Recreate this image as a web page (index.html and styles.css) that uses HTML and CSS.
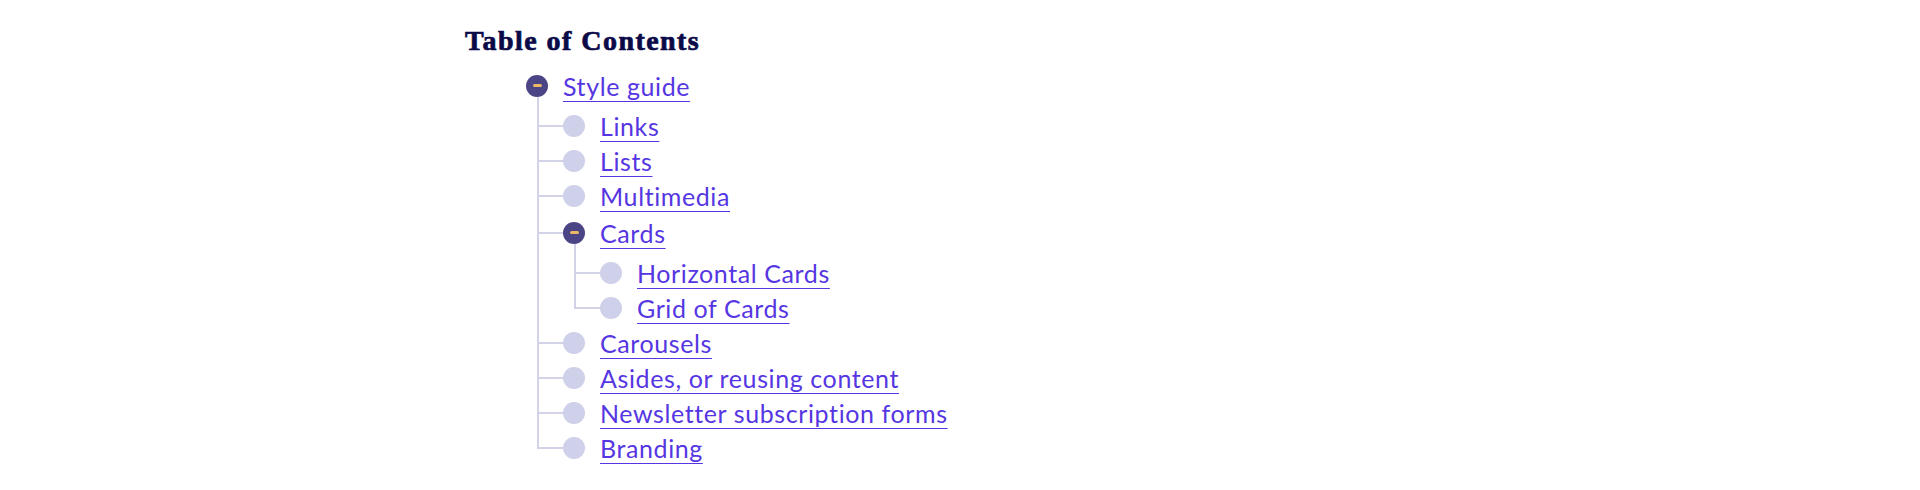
FILE: index.html
```html
<!DOCTYPE html>
<html lang="en">
<head>
<meta charset="utf-8">
<title>Table of Contents</title>
<link rel="stylesheet" href="styles.css">
</head>
<body>
<main class="page">
  <nav class="toc" aria-label="Table of Contents">
    <h2 class="toc-title">Table of Contents</h2>
    <ul class="tree">
      <li class="node open">
        <div class="row row-toggle"><button class="toggle" aria-label="Collapse"><span class="minus"></span></button><a href="#style-guide">Style guide</a></div>
        <ul class="branch">
          <li class="node"><div class="row"><span class="dot"></span><a href="#links">Links</a></div></li>
          <li class="node"><div class="row"><span class="dot"></span><a href="#lists">Lists</a></div></li>
          <li class="node"><div class="row"><span class="dot"></span><a href="#multimedia">Multimedia</a></div></li>
          <li class="node open">
            <div class="row row-toggle"><button class="toggle" aria-label="Collapse"><span class="minus"></span></button><a href="#cards">Cards</a></div>
            <ul class="branch">
              <li class="node"><div class="row"><span class="dot"></span><a href="#horizontal-cards">Horizontal Cards</a></div></li>
              <li class="node"><div class="row"><span class="dot"></span><a href="#grid-of-cards">Grid of Cards</a></div></li>
            </ul>
          </li>
          <li class="node"><div class="row"><span class="dot"></span><a href="#carousels">Carousels</a></div></li>
          <li class="node"><div class="row"><span class="dot"></span><a href="#asides">Asides, or reusing content</a></div></li>
          <li class="node"><div class="row"><span class="dot"></span><a href="#newsletter">Newsletter subscription forms</a></div></li>
          <li class="node"><div class="row"><span class="dot"></span><a href="#branding">Branding</a></div></li>
        </ul>
      </li>
    </ul>
  </nav>
</main>
</body>
</html>
```
FILE: styles.css
```css
* { box-sizing: border-box; }

html, body {
  margin: 0;
  padding: 0;
  background: #ffffff;
}

.page {
  width: 990px;
  margin: 0 auto;
}

.toc-title {
  margin: 0;
  padding-top: 26px;
  font-family: "Liberation Serif", "Times New Roman", serif;
  font-weight: 700;
  font-size: 28px;
  line-height: 30px;
  letter-spacing: 1.45px;
  color: #0b0a48;
  -webkit-text-stroke: 0.7px #0b0a48;
}

.tree,
.branch {
  list-style: none;
  margin: 0;
  padding: 0;
}

.tree {
  margin-top: 10px;
  padding-left: 61px;
}

.branch {
  margin-left: 37px;
}

.node {
  position: relative;
}

.row {
  display: flex;
  align-items: center;
  gap: 15px;
  height: 35px;
}

.row-toggle {
  height: 42px;
  padding: 2px 0 5px;
}

.dot,
.toggle {
  flex: none;
  width: 22px;
  height: 22px;
  border-radius: 50%;
}

.dot {
  background: #cfd0e9;
}

.toggle {
  display: flex;
  align-items: center;
  justify-content: center;
  border: 0;
  padding: 0;
  background: #4b4586;
  cursor: pointer;
}

.minus {
  display: block;
  width: 9px;
  height: 3px;
  border-radius: 2px;
  background: #ecb865;
}

.row a {
  margin-top: 2px;
  font-family: Lato, "Open Sans", sans-serif;
  font-size: 25px;
  line-height: 35px;
  letter-spacing: 0.6px;
  color: #5536e2;
  text-decoration: underline;
  text-decoration-thickness: 1px;
  text-underline-offset: 5px;
  white-space: nowrap;
}

/* tree connectors */
.branch > .node::before {
  content: "";
  position: absolute;
  left: -26px;
  top: 0;
  bottom: 0;
  width: 2px;
  background: #d2d2e8;
}

.branch > .node:first-child::before {
  top: -11px;
}

.branch > .node:last-child::before {
  bottom: auto;
  height: 18px;
}

.branch > .node:first-child:last-child::before {
  height: 29px;
}

.branch > .node::after {
  content: "";
  position: absolute;
  left: -26px;
  top: 16.5px;
  width: 26px;
  height: 2px;
  background: #d2d2e8;
}

.branch > .node.open::after {
  top: 18.5px;
}
```
